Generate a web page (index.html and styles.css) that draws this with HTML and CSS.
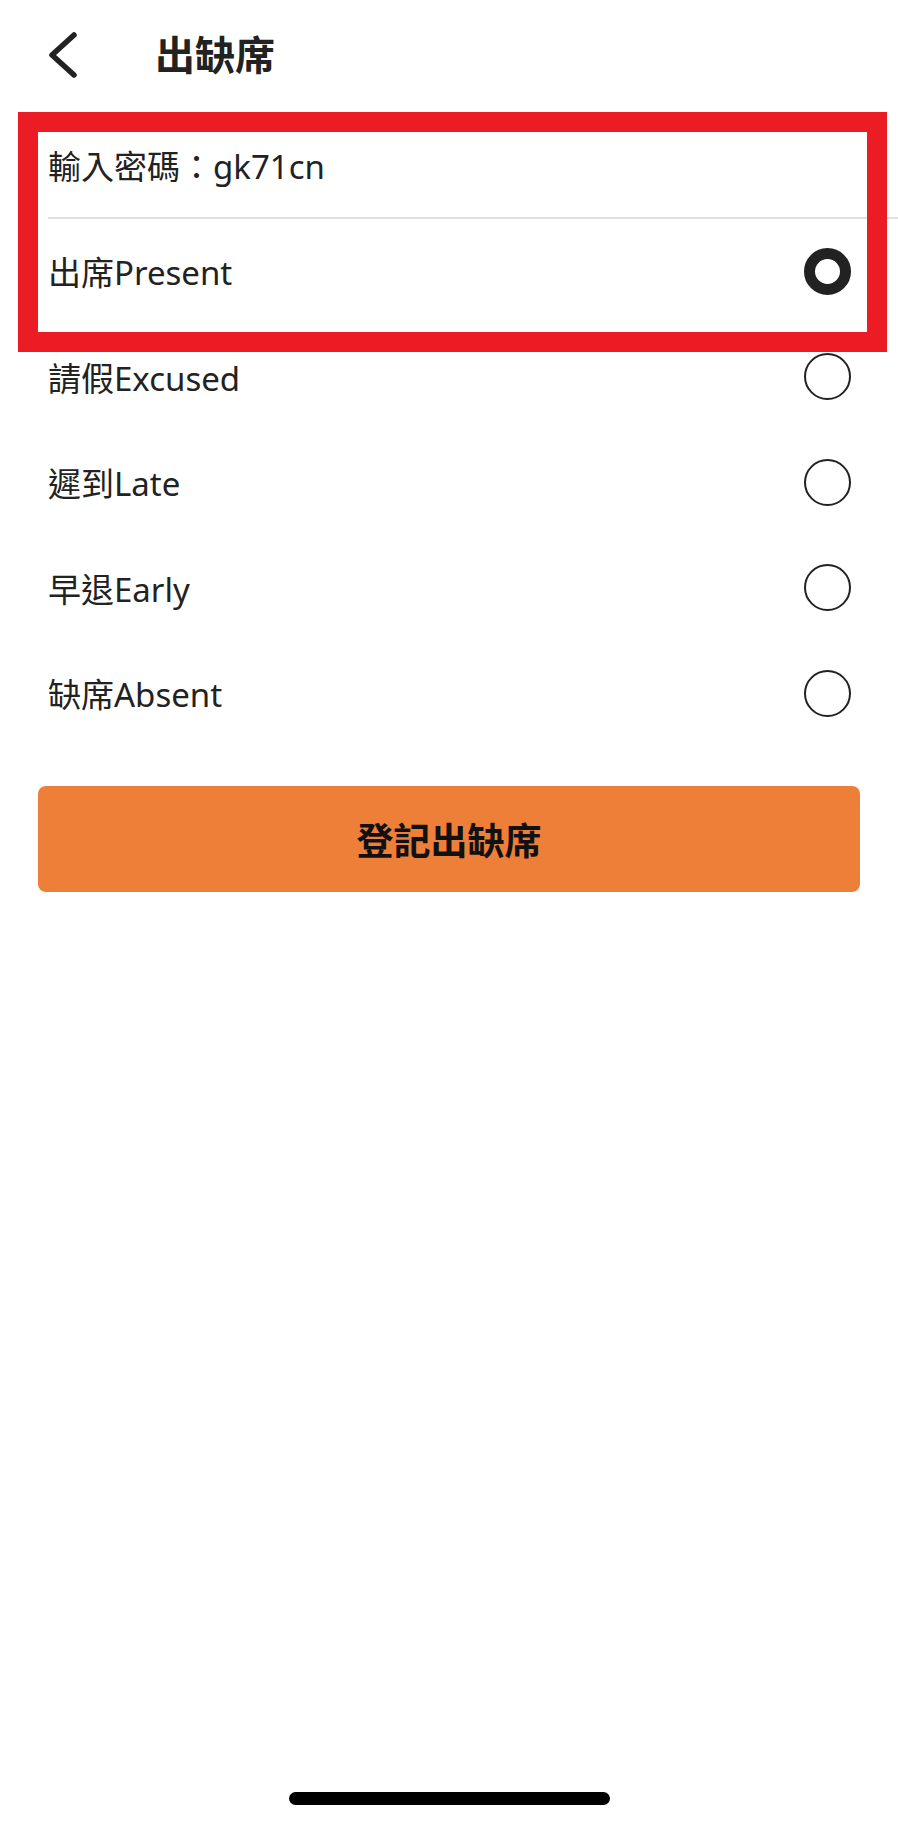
FILE: index.html
```html
<!DOCTYPE html>
<html lang="zh-Hant">
<head>
    <meta charset="UTF-8">
    <meta name="viewport" content="width=device-width, initial-scale=1.0">
    <title>出缺席</title>
    <link rel="stylesheet" href="styles.css">
</head>
<body>
    <div class="page">
        <header class="topbar">
            <svg class="back" width="34" height="52" viewBox="0 0 34 52">
                <polyline points="27,6 5,26 27,46" fill="none" stroke="#222" stroke-width="5.5" stroke-linecap="round" stroke-linejoin="round"/>
            </svg>
            <h1 class="title">出缺席</h1>
        </header>

        <div class="list">
            <div class="row row-code">輸入密碼：gk71cn</div>
            <div class="row">
                <span>出席Present</span>
                <span class="radio checked"></span>
            </div>
            <div class="row">
                <span>請假Excused</span>
                <span class="radio"></span>
            </div>
            <div class="row">
                <span>遲到Late</span>
                <span class="radio"></span>
            </div>
            <div class="row">
                <span>早退Early</span>
                <span class="radio"></span>
            </div>
            <div class="row">
                <span>缺席Absent</span>
                <span class="radio"></span>
            </div>
        </div>

        <button class="submit">登記出缺席</button>

        <div class="home-bar"></div>

        <div class="mark"></div>
    </div>
</body>
</html>
```

FILE: styles.css
```css
body { margin: 0; background: #fff; font-family: "Noto Sans", "Noto Sans CJK TC", sans-serif; color: #222; }
.page { position: relative; width: 898px; min-height: 1822px; display: flex; flex-direction: column; }

.topbar { height: 110px; display: flex; align-items: center; padding-left: 47px; }
.back { display: block; }
.title { margin: 0 0 0 74px; font-size: 40px; font-weight: 700; line-height: 1; color: #222; }

.list { padding-top: 3px; padding-left: 48px; }
.row { height: 105.5px; box-sizing: border-box; display: flex; align-items: center; justify-content: space-between; padding-right: 47px; font-size: 33px; }
.row-code { border-bottom: 2px solid #e0e0e0; }

.radio { width: 47px; height: 47px; box-sizing: border-box; border: 2.5px solid #222; border-radius: 50%; }
.radio.checked { border-width: 11px; }

.submit { margin: 40px 0 0 38px; width: 822px; height: 106px; background: #ee7f38; border: none; border-radius: 8px; font-family: inherit; font-size: 37px; font-weight: 700; color: #111; cursor: pointer; }

.home-bar { margin: auto auto 17px; width: 321px; height: 13px; border-radius: 7px; background: #000; }

.mark { position: absolute; top: 112px; left: 18px; width: 869px; height: 240px; box-sizing: border-box; border: 20px solid #ec1c24; }
```
